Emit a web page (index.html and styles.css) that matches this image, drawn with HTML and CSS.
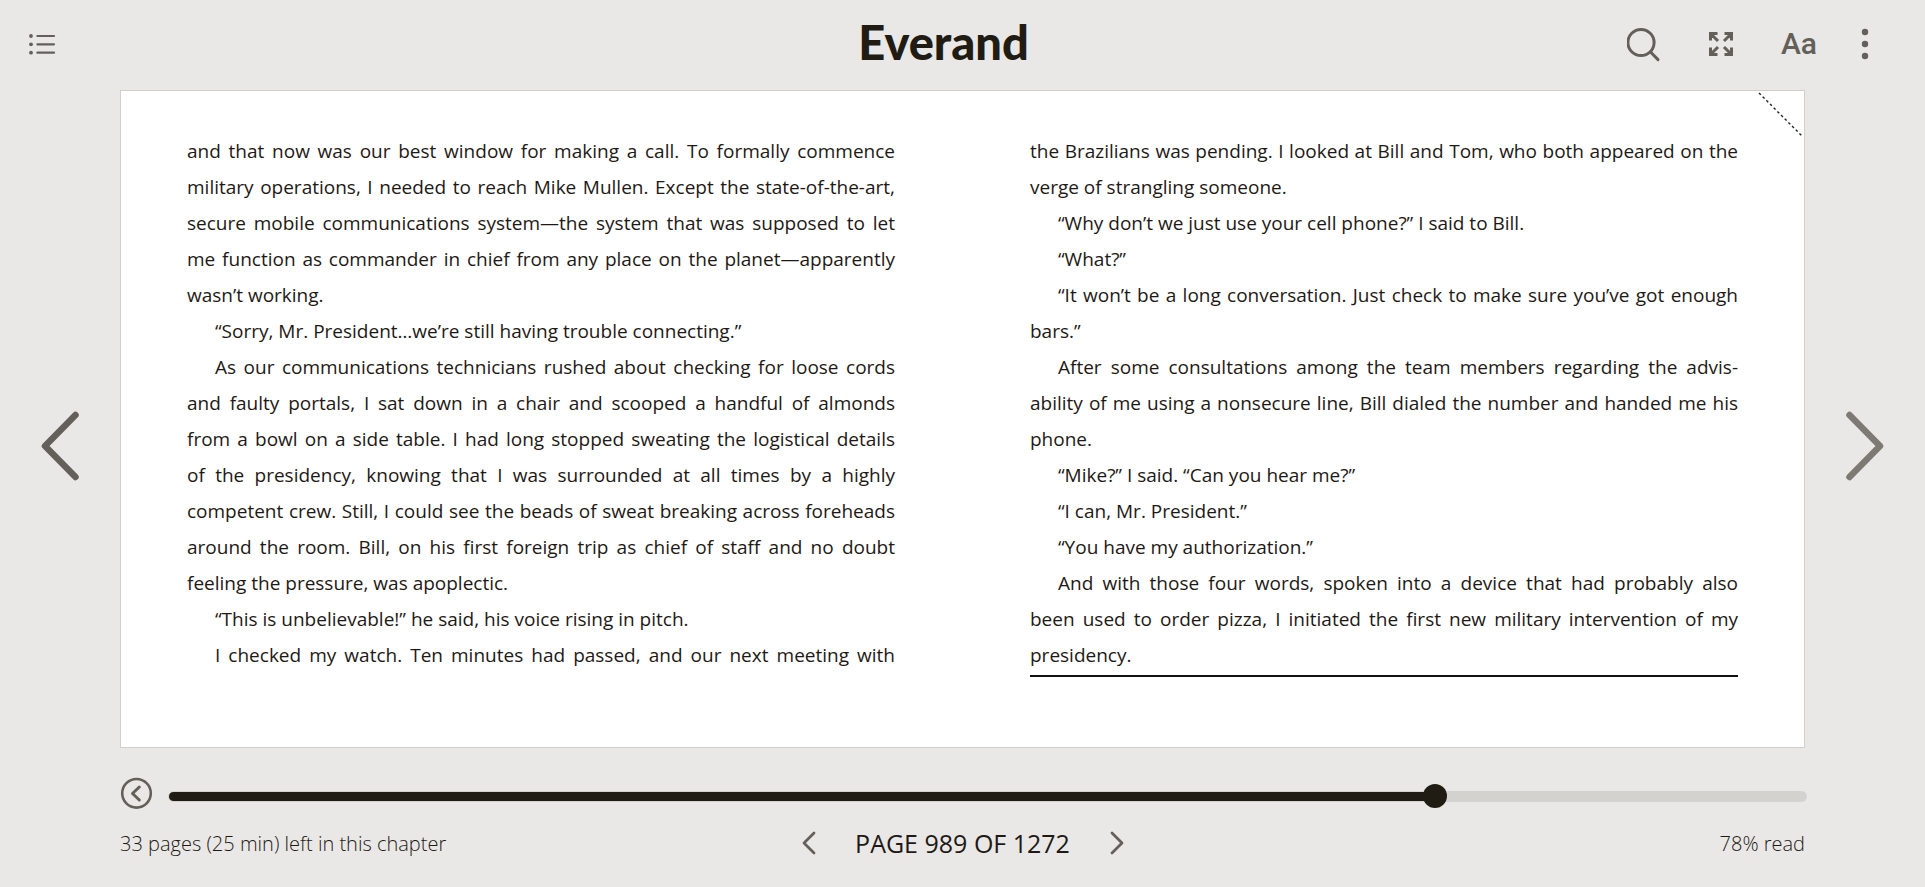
FILE: index.html
```html
<!DOCTYPE html>
<html lang="en">
<head>
<meta charset="utf-8">
<meta name="viewport" content="width=device-width, initial-scale=1">
<title>Everand</title>
<link rel="stylesheet" href="styles.css">
</head>
<body>
<header class="toolbar">
  <button class="icon-button contents" type="button" aria-label="Table of contents">
    <svg width="28" height="24" viewBox="0 0 28 24" fill="currentColor" stroke="currentColor">
      <g stroke="none"><circle cx="3" cy="4" r="1.9"/><circle cx="3" cy="12.3" r="1.9"/><circle cx="3" cy="20.7" r="1.9"/></g>
      <path d="M9.4 4H26M9.4 12.3H26M9.4 20.7H26" stroke-width="2.2" stroke-linecap="round"/>
    </svg>
  </button>
  <a class="brand" href="#">Everand</a>
  <div class="tools">
    <button class="icon-button" type="button" aria-label="Search">
      <svg width="36" height="36" viewBox="0 0 36 36" fill="none" stroke="currentColor" stroke-width="3" stroke-linecap="round">
        <circle cx="14" cy="16.5" r="13.1"/><path d="M24 26.5L31 33.6"/>
      </svg>
    </button>
    <button class="icon-button" type="button" aria-label="Full screen">
      <svg width="36" height="36" viewBox="0 0 36 36" fill="none" stroke="currentColor" stroke-width="3">
        <path d="M7.5 14.5V7.500H14.500M8 8l7 7M21.500 7.500H28.500V14.500M28 8l-7 7M7.500 21.500V28.500H14.500M8 28l7-7M21.500 28.500H28.500V21.500M28 28l-7-7"/>
      </svg>
    </button>
    <button class="icon-button type-button" type="button" aria-label="Display settings">Aa</button>
    <button class="icon-button" type="button" aria-label="More options">
      <svg width="12" height="36" viewBox="0 0 12 36" fill="currentColor">
        <circle cx="6" cy="6" r="3.2"/><circle cx="6" cy="18" r="3.2"/><circle cx="6" cy="30" r="3.2"/>
      </svg>
    </button>
  </div>
</header>

<main class="reader">
  <button class="turn" type="button" aria-label="Previous page">
    <svg width="44" height="76" viewBox="0 0 44 76" fill="none" stroke="currentColor" stroke-width="6.500" stroke-linecap="round" stroke-linejoin="round"><path d="M37.500 7L7 38l30.500 31"/></svg>
  </button>
  <article class="spread">
    <button class="bookmark" type="button" aria-label="Add bookmark">
      <svg width="46" height="46" viewBox="0 0 46 46" fill="none" stroke="#222" stroke-width="1.400" stroke-dasharray="2.6 2.6"><path d="M1 2L44 45"/></svg>
    </button>
    <section class="leaf">
      <p>
        <span class="line">and that now was our best window for making a call. To formally commence</span>
        <span class="line">military operations, I needed to reach Mike Mullen. Except the state-of-the-art,</span>
        <span class="line">secure mobile communications system—the system that was supposed to let</span>
        <span class="line">me function as commander in chief from any place on the planet—apparently</span>
        <span class="line last">wasn’t working.</span>
      </p>
      <p class="indent"><span class="line last">“Sorry, Mr. President…we’re still having trouble connecting.”</span></p>
      <p class="indent">
        <span class="line">As our communications technicians rushed about checking for loose cords</span>
        <span class="line">and faulty portals, I sat down in a chair and scooped a handful of almonds</span>
        <span class="line">from a bowl on a side table. I had long stopped sweating the logistical details</span>
        <span class="line">of the presidency, knowing that I was surrounded at all times by a highly</span>
        <span class="line">competent crew. Still, I could see the beads of sweat breaking across foreheads</span>
        <span class="line">around the room. Bill, on his first foreign trip as chief of staff and no doubt</span>
        <span class="line last">feeling the pressure, was apoplectic.</span>
      </p>
      <p class="indent"><span class="line last">“This is unbelievable!” he said, his voice rising in pitch.</span></p>
      <p class="indent"><span class="line">I checked my watch. Ten minutes had passed, and our next meeting with</span></p>
    </section>
    <section class="leaf">
      <p>
        <span class="line">the Brazilians was pending. I looked at Bill and Tom, who both appeared on the</span>
        <span class="line last">verge of strangling someone.</span>
      </p>
      <p class="indent"><span class="line last">“Why don’t we just use your cell phone?” I said to Bill.</span></p>
      <p class="indent"><span class="line last">“What?”</span></p>
      <p class="indent">
        <span class="line">“It won’t be a long conversation. Just check to make sure you’ve got enough</span>
        <span class="line last">bars.”</span>
      </p>
      <p class="indent">
        <span class="line">After some consultations among the team members regarding the advis-</span>
        <span class="line">ability of me using a nonsecure line, Bill dialed the number and handed me his</span>
        <span class="line last">phone.</span>
      </p>
      <p class="indent"><span class="line last">“Mike?” I said. “Can you hear me?”</span></p>
      <p class="indent"><span class="line last">“I can, Mr. President.”</span></p>
      <p class="indent"><span class="line last">“You have my authorization.”</span></p>
      <p class="indent">
        <span class="line">And with those four words, spoken into a device that had probably also</span>
        <span class="line">been used to order pizza, I initiated the first new military intervention of my</span>
        <span class="line last">presidency.</span>
      </p>
      <hr class="section-end">
    </section>
  </article>
  <button class="turn next" type="button" aria-label="Next page">
    <svg width="44" height="76" viewBox="0 0 44 76" fill="none" stroke="currentColor" stroke-width="6.500" stroke-linecap="round" stroke-linejoin="round"><path d="M6.500 7L37 38 6.500 69"/></svg>
  </button>
</main>

<footer class="progress">
  <div class="scrub">
    <button class="icon-button" type="button" aria-label="Go back">
      <svg width="33" height="32" viewBox="0 0 33 32" fill="none" stroke="currentColor" stroke-width="2.600" stroke-linecap="round" stroke-linejoin="round">
        <circle cx="16.500" cy="16.300" r="14.300"/><path d="M19.300 10L12.500 16.500l6.800 6.500" stroke-width="3"/>
      </svg>
    </button>
    <input class="slider" type="range" min="1" max="1272" value="989" aria-label="Reading position">
  </div>
  <div class="status">
    <span class="chapter">33 pages (25 min) left in this chapter</span>
    <div class="pager">
      <button class="icon-button" type="button" aria-label="Back one page">
        <svg width="16" height="28" viewBox="0 0 16 28" fill="none" stroke="currentColor" stroke-width="2.800" stroke-linecap="round" stroke-linejoin="round"><path d="M13 4L3 14l10 10"/></svg>
      </button>
      <span class="page-number">PAGE 989 OF 1272</span>
      <button class="icon-button" type="button" aria-label="Forward one page">
        <svg width="16" height="28" viewBox="0 0 16 28" fill="none" stroke="currentColor" stroke-width="2.800" stroke-linecap="round" stroke-linejoin="round"><path d="M3 4l10 10L3 24"/></svg>
      </button>
    </div>
    <span class="percent">78% read</span>
  </div>
</footer>
</body>
</html>
```

FILE: styles.css
```css
* {
  box-sizing: border-box;
}

body {
  margin: 0;
  min-height: 100vh;
  display: flex;
  flex-direction: column;
  background: #e9e8e6;
  color: #1e1915;
  font-family: "Open Sans", sans-serif;
}

button {
  border: 0;
  padding: 0;
  background: none;
  color: #63605a;
  font-family: inherit;
  cursor: pointer;
}

svg {
  display: block;
}

.toolbar {
  display: grid;
  grid-template-columns: 1fr auto 1fr;
  align-items: center;
  height: 90px;
  padding: 0 54px 2px 16px;
}

.icon-button {
  display: flex;
  align-items: center;
  justify-content: center;
}

.contents {
  width: 52px;
  height: 52px;
}

.brand {
  padding-bottom: 4px;
  color: #211c13;
  font-family: Lato, sans-serif;
  font-size: 47px;
  font-weight: 900;
  line-height: 56px;
  text-decoration: none;
}

.tools {
  display: flex;
  align-items: center;
  justify-content: flex-end;
  gap: 40px;
}

.type-button {
  width: 40px;
  font-family: Roboto, sans-serif;
  font-size: 30px;
  font-weight: 500;
  line-height: 36px;
}

.reader {
  flex: 1;
  display: grid;
  grid-template-columns: 120px minmax(0, 1fr) 120px;
}

.turn {
  display: flex;
  align-items: center;
  justify-content: center;
  padding-top: 54px;
}

.next {
  color: #7d7a74;
}

.spread {
  position: relative;
  display: grid;
  grid-template-columns: minmax(0, 1fr) minmax(0, 1fr);
  gap: 135px;
  padding: 42px 66px 0;
  border: 1px solid #d0cfcc;
  background: #fff;
}

.bookmark {
  position: absolute;
  top: 0;
  right: 0;
}

.leaf {
  font-size: 19px;
  line-height: 36px;
}

.leaf p {
  margin: 0;
}

.line {
  display: block;
  text-align-last: justify;
  white-space: nowrap;
}

.last {
  text-align-last: left;
}

.indent .line:first-child {
  text-indent: 28px;
}

.section-end {
  margin: 2px 0 0;
  border: 0;
  border-top: 2px solid #111;
}

.progress {
  padding: 29px 120px 26px;
}

.scrub {
  display: flex;
  align-items: flex-end;
  gap: 15px;
  margin-right: -2px;
}

.slider {
  flex: 1;
  min-width: 0;
  height: 26px;
  margin: 0;
  appearance: none;
  background: none;
}

.slider::-webkit-slider-runnable-track {
  height: 11px;
  border: 1px solid #d3d2cf;
  border-radius: 6px;
  background: linear-gradient(to right, #211c13 77%, #d3d2cf 77%);
}

.slider::-webkit-slider-thumb {
  appearance: none;
  width: 24px;
  height: 24px;
  margin-top: -8px;
  border-radius: 50%;
  background: #211c13;
}

.status {
  display: grid;
  grid-template-columns: 1fr auto 1fr;
  align-items: center;
  min-height: 36px;
  margin-top: 16px;
  font-size: 20px;
  font-weight: 300;
}

.chapter,
.percent {
  color: #1e1915;
}

.pager {
  display: flex;
  align-items: center;
  gap: 36px;
}

.page-number {
  min-width: 220px;
  font-size: 25px;
  font-weight: 500;
  line-height: 32px;
  text-align: center;
}

.percent {
  text-align: right;
}
```
